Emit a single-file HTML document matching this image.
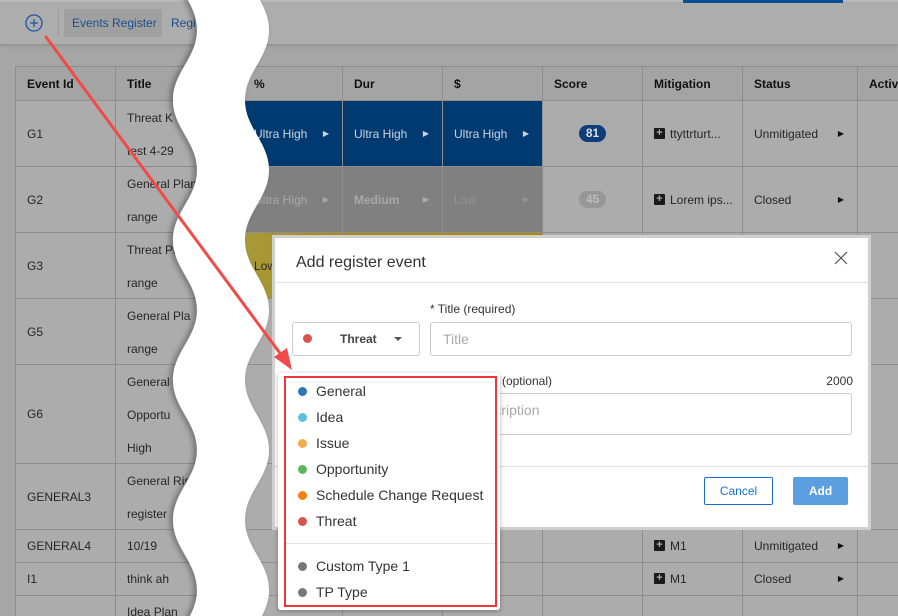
<!DOCTYPE html>
<html><head><meta charset="utf-8">
<style>
*{box-sizing:border-box;margin:0;padding:0}
html,body{width:898px;height:616px;overflow:hidden}
body{position:relative;background:#a6a6a6;font-family:"Liberation Sans",Arial,sans-serif;color:#262626}
.abs{position:absolute}
.clip{left:0;top:0;width:898px;height:616px;overflow:hidden}
.top{left:0;top:0;width:898px;height:44px;background:#adadad;border-top:2px solid #b8b8b8;box-shadow:0 2px 3px rgba(0,0,0,.12)}
table{position:absolute;left:15px;top:66px;width:902px;border-collapse:collapse;table-layout:fixed;font-size:12px}
td,th{border:1px solid #8e8e8e;padding:0 11px;text-align:left;vertical-align:middle;background:#acacac;white-space:nowrap;overflow:hidden}
th{background:#a4a4a4;height:34px;font-weight:bold;color:#111}
.t{white-space:normal}
.t div{line-height:33px;height:62px;overflow:visible;margin-top:-2px}
.t div.h3{height:95px}
.ub{background:#003a70;color:#c9d3df}
.gr{background:#808080;color:#a8a8a8}
.ye{background:#a88a00}
.yl{background:linear-gradient(90deg,#a89a40,#a88a00)}
.tri{float:right;font-size:8px;margin-top:2px;margin-right:2px}
.badge{display:inline-block;width:27px;height:17px;border-radius:9px;font-weight:bold;font-size:12px;text-align:center;line-height:17px}
.plus{display:inline-block;width:11px;height:11px;background:#1a1a1a;color:#acacac;font-size:11px;line-height:11px;text-align:center;font-weight:bold;margin-right:5px;vertical-align:middle;border-radius:1px;position:relative;top:-1px}
.dlg{left:272px;top:235px;width:599px;height:295px;background:#cfcfcf;padding:3px}
.dlgi{width:100%;height:100%;background:#fff;position:relative}
.dd{left:278px;top:373px;width:222px;height:237px;background:#fff;border-radius:3px;box-shadow:0 1px 5px rgba(0,0,0,.3)}
.it{position:absolute;left:316px;font-size:14px;color:#333}
.dot{position:absolute;left:298px;width:9px;height:9px;border-radius:50%}
</style></head><body>
<div class="abs clip">
<div class="abs top"></div>
<div class="abs" style="left:683px;top:0;width:160px;height:3px;background:#0b4c93"></div>
<svg class="abs" style="left:24px;top:13px" width="20" height="20"><circle cx="10" cy="10" r="8" fill="none" stroke="#1d56a8" stroke-width="1.3"/><path d="M10 6v8M6 10h8" stroke="#1d56a8" stroke-width="1.3"/></svg>
<div class="abs" style="left:58px;top:10px;width:1px;height:26px;background:#999"></div>
<div class="abs" style="left:64px;top:9px;width:98px;height:28px;background:#a0a0a0;border-radius:2px;font-size:12px;color:#1d4f8f;line-height:28px;padding-left:8px">Events Register</div>
<div class="abs" style="left:171px;top:16px;font-size:12px;color:#1d4f8f">Regi</div>

<table>
<colgroup><col style="width:100px"><col style="width:127px"><col style="width:100px"><col style="width:100px"><col style="width:100px"><col style="width:100px"><col style="width:100px"><col style="width:115px"><col style="width:60px"></colgroup>
<tr><th>Event Id</th><th>Title</th><th>%</th><th>Dur</th><th>$</th><th>Score</th><th>Mitigation</th><th>Status</th><th>Activi</th></tr>
<tr style="height:66px"><td>G1</td><td class="t"><div>Threat K<br>test 4-29</div></td><td class="ub">Ultra High<span class="tri">▶</span></td><td class="ub">Ultra High<span class="tri">▶</span></td><td class="ub">Ultra High<span class="tri">▶</span></td><td style="text-align:center"><span class="badge" style="background:#0d3e78;color:#ddd">81</span></td><td><span class="plus">+</span>ttyttrturt...</td><td>Unmitigated<span class="tri" style="color:#111">▶</span></td><td></td></tr>
<tr style="height:66px"><td>G2</td><td class="t"><div>General Plan<br>range</div></td><td class="gr">Ultra High<span class="tri">▶</span></td><td class="gr" style="font-weight:bold">Medium<span class="tri">▶</span></td><td class="gr" style="color:#939393">Low<span class="tri">▶</span></td><td style="text-align:center"><span class="badge" style="background:#979797;color:#bbb">45</span></td><td><span class="plus">+</span>Lorem ips...</td><td>Closed<span class="tri" style="color:#111">▶</span></td><td></td></tr>
<tr style="height:66px"><td>G3</td><td class="t"><div>Threat Pl<br>range</div></td><td class="yl">Low</td><td class="ye"></td><td class="ye"></td><td></td><td></td><td></td><td></td></tr>
<tr style="height:66px"><td>G5</td><td class="t"><div>General Pla<br>range</div></td><td></td><td></td><td></td><td></td><td></td><td></td><td></td></tr>
<tr style="height:99px"><td>G6</td><td class="t"><div class="h3">General<br>Opportu<br>High</div></td><td></td><td></td><td></td><td></td><td></td><td></td><td></td></tr>
<tr style="height:66px"><td>GENERAL3</td><td class="t"><div>General Risk<br>register</div></td><td></td><td></td><td></td><td></td><td></td><td></td><td></td></tr>
<tr style="height:33px"><td>GENERAL4</td><td>10/19</td><td></td><td></td><td></td><td></td><td><span class="plus">+</span>M1</td><td>Unmitigated<span class="tri" style="color:#111">▶</span></td><td></td></tr>
<tr style="height:33px"><td>I1</td><td>think ah</td><td></td><td></td><td></td><td></td><td><span class="plus">+</span>M1</td><td>Closed<span class="tri" style="color:#111">▶</span></td><td></td></tr>
<tr style="height:33px"><td></td><td>Idea Plan</td><td></td><td></td><td></td><td></td><td></td><td></td><td></td></tr>
</table>

<svg class="abs" style="left:0;top:0" width="898" height="616">
<defs><filter id="sh" x="-50%" y="-10%" width="200%" height="120%"><feDropShadow dx="-3" dy="0" stdDeviation="3" flood-color="#000" flood-opacity="0.35"/></filter></defs>
<path filter="url(#sh)" fill="#fff" d="M173 -40 C173 -12 197 2 197 30 C197 58 173 72 173 100 C173 128 197 142 197 170 C197 198 173 212 173 240 C173 268 197 282 197 310 C197 338 173 352 173 380 C173 408 197 422 197 450 C197 478 173 492 173 520 C173 548 197 562 197 590 C197 618 173 632 173 660 L245 660 C245 632 269 618 269 590 C269 562 245 548 245 520 C245 492 269 478 269 450 C269 422 245 408 245 380 C245 352 269 338 269 310 C269 282 245 268 245 240 C245 212 269 198 269 170 C269 142 245 128 245 100 C245 72 269 58 269 30 C269 2 245 -12 245 -40 Z"/>
</svg>

<div class="abs dlg"><div class="dlgi">
<div class="abs" style="left:21px;top:16px;font-size:16px;color:#333">Add register event</div>
<svg class="abs" style="left:559px;top:13px" width="14" height="14"><path d="M1 1L13 13M13 1L1 13" stroke="#555" stroke-width="1.2"/></svg>
<div class="abs" style="left:0;top:44px;width:100%;height:1px;background:#ddd"></div>
<div class="abs" style="left:17px;top:84px;width:128px;height:34px;border:1px solid #ccc;border-radius:3px"></div>
<div class="abs" style="left:28px;top:96px;width:9px;height:9px;border-radius:50%;background:#d9534f"></div>
<div class="abs" style="left:65px;top:94px;font-size:12px;font-weight:bold;color:#444">Threat</div>
<div class="abs" style="left:119px;top:99px;width:0;height:0;border-left:4px solid transparent;border-right:4px solid transparent;border-top:4px solid #555"></div>
<div class="abs" style="left:155px;top:64px;font-size:12px;color:#333">* Title (required)</div>
<div class="abs" style="left:155px;top:84px;width:422px;height:34px;border:1px solid #ccc;border-radius:3px;font-size:14px;color:#aaa;padding:8px 12px">Title</div>
<div class="abs" style="left:155px;top:136px;width:122px;font-size:12px;color:#333;text-align:right">Description (optional)</div>
<div class="abs" style="right:15px;top:136px;font-size:12px;color:#333">2000</div>
<div class="abs" style="left:155px;top:155px;width:422px;height:42px;border:1px solid #ccc;border-radius:3px;font-size:14px;color:#aaa;padding:8px 12px;overflow:hidden">Add description</div>
<div class="abs" style="left:0;top:228px;width:100%;height:1px;background:#ddd"></div>
<div class="abs" style="left:429px;top:239px;width:69px;height:28px;border:1px solid #1a6fcf;border-radius:2px;font-size:12px;color:#1a6fcf;text-align:center;line-height:26px">Cancel</div>
<div class="abs" style="left:518px;top:239px;width:55px;height:28px;background:#5b9fe0;border-radius:2px;font-size:12px;color:#fff;font-weight:bold;text-align:center;line-height:28px">Add</div>
</div></div>

<div class="abs dd"></div>
<div class="abs" style="left:284px;top:376px;width:213px;height:231px;border:2px solid #f0353b"></div>
<div class="abs" style="left:286px;top:543px;width:209px;height:1px;background:#e4e4e4"></div>
<div class="dot" style="top:387px;background:#2e75b6"></div><div class="it" style="top:383px">General</div>
<div class="dot" style="top:413px;background:#5bc0de"></div><div class="it" style="top:409px">Idea</div>
<div class="dot" style="top:439px;background:#f0ad4e"></div><div class="it" style="top:435px">Issue</div>
<div class="dot" style="top:465px;background:#5cb85c"></div><div class="it" style="top:461px">Opportunity</div>
<div class="dot" style="top:491px;background:#ff7f0e"></div><div class="it" style="top:487px">Schedule Change Request</div>
<div class="dot" style="top:517px;background:#d9534f"></div><div class="it" style="top:513px">Threat</div>
<div class="dot" style="top:562px;background:#777"></div><div class="it" style="top:558px">Custom Type 1</div>
<div class="dot" style="top:588px;background:#777"></div><div class="it" style="top:584px">TP Type</div>

<svg class="abs" style="left:0;top:0" width="898" height="616">
<path d="M46 37L285 360" stroke="#f24a4a" stroke-width="3" stroke-linecap="round"/>
<path d="M292 370L274 357L287 348Z" fill="#f24a4a"/>
</svg>
</div>
</body></html>
